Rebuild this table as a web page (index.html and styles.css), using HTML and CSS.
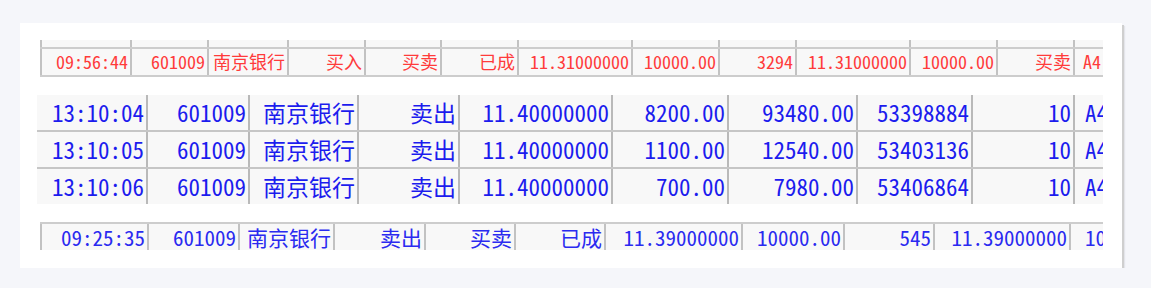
FILE: index.html
```html
<!DOCTYPE html>
<html lang="zh-CN">
<head>
<meta charset="utf-8">
<title>成交记录</title>
<link rel="stylesheet" href="styles.css">
</head>
<body>
<div class="card">
  <div class="tbl tbl-red">
    <div class="row head">
      <div></div><div></div><div></div><div></div><div></div><div></div><div></div><div></div><div></div><div></div><div></div><div></div><div></div>
    </div>
    <div class="row">
      <div>09:56:44</div><div>601009</div><div>南京银行</div><div>买入</div><div>买卖</div><div>已成</div><div>11.31000000</div><div>10000.00</div><div>3294</div><div>11.31000000</div><div>10000.00</div><div>买卖</div><div class="last">A4</div>
    </div>
  </div>

  <div class="tbl tbl-mid">
    <div class="row">
      <div>13:10:04</div><div>601009</div><div>南京银行</div><div>卖出</div><div>11.40000000</div><div>8200.00</div><div>93480.00</div><div>53398884</div><div>10</div><div class="last">A4</div>
    </div>
    <div class="row">
      <div>13:10:05</div><div>601009</div><div>南京银行</div><div>卖出</div><div>11.40000000</div><div>1100.00</div><div>12540.00</div><div>53403136</div><div>10</div><div class="last">A4</div>
    </div>
    <div class="row">
      <div>13:10:06</div><div>601009</div><div>南京银行</div><div>卖出</div><div>11.40000000</div><div>700.00</div><div>7980.00</div><div>53406864</div><div>10</div><div class="last">A4</div>
    </div>
  </div>

  <div class="tbl tbl-low">
    <div class="row">
      <div>09:25:35</div><div>601009</div><div>南京银行</div><div>卖出</div><div>买卖</div><div>已成</div><div>11.39000000</div><div>10000.00</div><div>545</div><div>11.39000000</div><div class="last">10</div>
    </div>
  </div>
</div>
</body>
</html>
```

FILE: styles.css
```css
html, body {
  margin: 0;
  padding: 0;
  background: #f5f6fa;
}

body {
  padding: 23px 0 0 20px;
}

.card {
  width: 1102px;
  height: 245px;
  box-sizing: border-box;
  background: #ffffff;
  box-shadow: 2px 2px 0 #cfcfcf, 3px 3px 1px #e4e5ea;
  padding: 17px 0 0 0;
  display: flex;
  flex-direction: column;
}

.tbl {
  width: 1063px;
  overflow: hidden;
  background: #f8f8f8;
  font-family: "Noto Sans Mono CJK SC", "Liberation Mono", "Noto Sans CJK SC", monospace;
  white-space: nowrap;
}

.row {
  display: grid;
  box-sizing: border-box;
}

.row > div {
  box-sizing: border-box;
  text-align: right;
  padding-right: 2px;
  overflow: hidden;
}

.row > div.last {
  text-align: left;
}

/* ---------- red table ---------- */
.tbl-red {
  margin-left: 20px;
  color: #ff3b3b;
  font-size: 18px;
}

.tbl-red .row {
  grid-template-columns: 90px 77px 80px 77px 76px 77px 114px 87px 77px 114px 87px 77px 80px;
  border-bottom: 2px solid #cdcdcd;
}

.tbl-red .row > div {
  border-left: 2px solid #c2c2c2;
}

.tbl-red .row.head {
  height: 9px;
}

.tbl-red .row:not(.head) {
  height: 28px;
  line-height: 25px;
}

.tbl-red .row > div.last {
  padding-left: 8px;
}

/* ---------- middle blue table ---------- */
.tbl-mid {
  margin-left: 17px;
  margin-top: 18px;
  width: 1066px;
  color: #1c1cee;
  font-size: 23px;
}

.tbl-mid .row {
  grid-template-columns: 109px 102px 109px 101px 153px 116px 129px 115px 102px 90px;
  height: 37px;
  line-height: 34px;
  border-bottom: 2px solid #c6c6c6;
}

.tbl-mid .row:last-child {
  height: 35px;
  border-bottom: none;
}

.tbl-mid .row > div + div {
  border-left: 2px solid #b9b9b9;
}

.tbl-mid .row > div.last {
  padding-left: 10px;
}

/* ---------- lower blue table ---------- */
.tbl-low {
  margin-left: 20px;
  margin-top: 18px;
  color: #2a2af0;
  font-size: 21px;
}

.tbl-low .row {
  grid-template-columns: 107px 91px 95px 91px 90px 90px 137px 102px 90px 136px 90px;
  height: 28px;
  line-height: 26px;
  border-top: 2px solid #cdcdcd;
}

.tbl-low .row > div {
  border-left: 2px solid #c2c2c2;
}

.tbl-low .row > div.last {
  padding-left: 14px;
}
```
